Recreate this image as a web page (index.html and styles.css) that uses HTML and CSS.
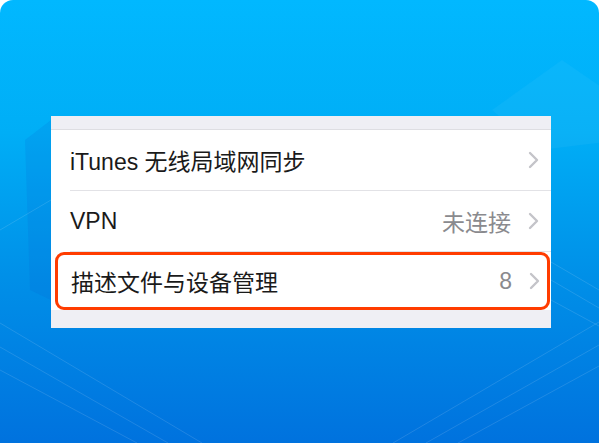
FILE: index.html
```html
<!DOCTYPE html>
<html lang="zh-CN">
<head>
<meta charset="utf-8">
<link rel="stylesheet" href="styles.css">
</head>
<body>
<div class="screen">
  <svg class="deco" width="599" height="443" viewBox="0 0 599 443" aria-hidden="true">
    <polygon points="492,110 562,60 620,100 620,140 540,150" fill="#ffffff" fill-opacity="0.04"/>
    <polygon points="25,140 51,120 51,300 30,290" fill="#0a5fd0" fill-opacity="0.15"/>
    <g stroke="#ffffff" stroke-opacity="0.12" stroke-width="1" fill="none">
      <line x1="0" y1="323" x2="202" y2="443"/>
      <line x1="0" y1="347" x2="168" y2="443"/>
      <line x1="0" y1="370" x2="137" y2="443"/>
      <line x1="599" y1="322" x2="393" y2="443"/>
      <line x1="599" y1="345" x2="426" y2="443"/>
      <line x1="599" y1="366" x2="458" y2="443"/>
      <line x1="551" y1="262" x2="599" y2="290"/>
      <line x1="551" y1="280" x2="599" y2="308"/>
      <line x1="551" y1="300" x2="599" y2="326"/>
      <line x1="0" y1="230" x2="51" y2="200"/>
    </g>
  </svg>
  <div class="panel">
    <div class="group">
      <div class="row">
        <span class="label">iTunes 无线局域网同步</span>
        <span class="right">
          <svg class="chev" width="11" height="18" viewBox="0 0 11 18"><path d="M2 2 L9 9 L2 16" /></svg>
        </span>
      </div>
      <div class="row">
        <span class="label">VPN</span>
        <span class="right">
          <span class="value">未连接</span>
          <svg class="chev" width="11" height="18" viewBox="0 0 11 18"><path d="M2 2 L9 9 L2 16" /></svg>
        </span>
      </div>
      <div class="row highlight">
        <span class="label">描述文件与设备管理</span>
        <span class="right">
          <span class="value">8</span>
          <svg class="chev" width="11" height="18" viewBox="0 0 11 18"><path d="M2 2 L9 9 L2 16" /></svg>
        </span>
      </div>
    </div>
  </div>
</div>
</body>
</html>
```

FILE: styles.css
```css
html, body {
  margin: 0;
  padding: 0;
  background: #ffffff;
}

.screen {
  position: relative;
  width: 599px;
  height: 443px;
  overflow: hidden;
  border-radius: 13px 13px 0 0;
  background: linear-gradient(180deg, #01b8ff 0%, #00aef6 30%, #0090e8 62%, #0072de 100%);
  padding-top: 116px;
  box-sizing: border-box;
  font-family: "Liberation Sans", "Noto Sans CJK SC", sans-serif;
}

.deco {
  position: absolute;
  left: 0;
  top: 0;
}

.panel {
  position: relative;
  width: 500px;
  margin-left: 51px;
  background: #efeff4;
  padding-top: 13px;
  padding-bottom: 18px;
}

.group {
  background: #ffffff;
  border-top: 1px solid #dedee2;
}

.row {
  display: flex;
  align-items: center;
  justify-content: space-between;
  height: 60px;
  margin-left: 19px;
  padding-right: 12px;
  border-bottom: 1px solid #e2e2e6;
  font-size: 23px;
  color: #1a1a1a;
}

.row.highlight {
  height: 52px;
  margin: 0 1px 0 4px;
  padding-left: 13px;
  padding-right: 7px;
  border: 3.5px solid #ff3c00;
  border-radius: 9px;
  background: #ffffff;
}

.label {
  white-space: nowrap;
}

.right {
  display: flex;
  align-items: center;
  gap: 17px;
}

.value {
  color: #8a8a8e;
}

.chev path {
  fill: none;
  stroke: #c4c4c9;
  stroke-width: 2.4;
  stroke-linecap: round;
  stroke-linejoin: round;
}
```
